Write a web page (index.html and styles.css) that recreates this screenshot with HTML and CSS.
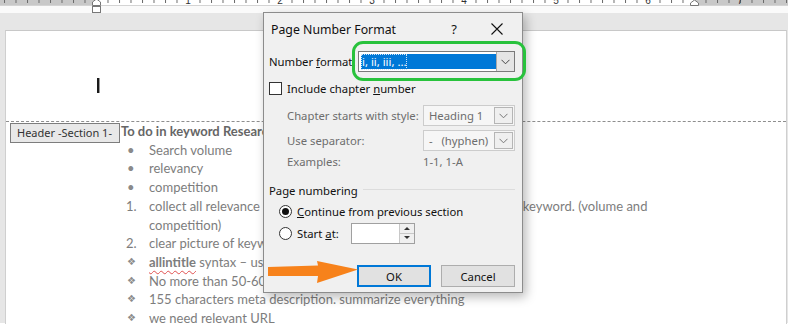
FILE: index.html
```html
<!DOCTYPE html>
<html>
<head>
	<meta charset="utf-8">
	<title>Page Number Format</title>
	<link rel="stylesheet" href="styles.css">
</head>
<body>

	<div class="top">
		<svg class="ruler" width="788" height="13" viewBox="0 0 788 13">
			<defs>
				<pattern id="ticks" x="96" y="0" width="11.5" height="5" patternUnits="userSpaceOnUse">
					<line x1="0.5" y1="0" x2="0.5" y2="3" stroke="#6a6a6a" stroke-width="1"/>
				</pattern>
			</defs>
			<rect x="0" y="0" width="96" height="5" fill="#c8c8c8"/>
			<rect x="96" y="0" width="598" height="5" fill="#ffffff"/>
			<rect x="694" y="0" width="94" height="5" fill="#c8c8c8"/>
			<rect x="0" y="0" width="788" height="4" fill="url(#ticks)"/>
			<line x1="0" y1="5.5" x2="788" y2="5.5" stroke="#d4d4d4"/>
			<g fill="#333" font-family="Liberation Sans, sans-serif" font-size="10" text-anchor="middle">
				<rect x="184" y="0" width="8" height="5" fill="#fff"/>
				<rect x="276" y="0" width="8" height="5" fill="#fff"/>
				<rect x="368" y="0" width="8" height="5" fill="#fff"/>
				<rect x="460" y="0" width="8" height="5" fill="#fff"/>
				<rect x="552" y="0" width="8" height="5" fill="#fff"/>
				<rect x="644" y="0" width="8" height="5" fill="#fff"/>
				<text x="188" y="4">1</text>
				<text x="280" y="4">2</text>
				<text x="372" y="4">3</text>
				<text x="464" y="4">4</text>
				<text x="556" y="4">5</text>
				<text x="648" y="4">6</text>
				<text x="740" y="4">7</text>
			</g>
			<path d="M92.5 5.5 L92.5 2 L96.5 -1 L100.5 2 L100.5 5.5 Z" fill="#fff" stroke="#777"/>
			<rect x="92.5" y="6.5" width="8" height="6" fill="#fff" stroke="#777"/>
			<path d="M690.5 5.5 L690.5 3 L694.5 0 L698.5 3 L698.5 5.5 Z" fill="#fff" stroke="#777"/>
		</svg>
	</div>

	<div class="canvas">
		<div class="page">
			<div class="header-zone">
				<div class="caret"></div>
			</div>
			<div class="header-line"></div>
			<div class="header-tag">Header -Section 1-</div>

			<div class="doc">
				<p class="heading">To do in keyword Research</p>
				<ul class="dots">
					<li>Search volume</li>
					<li>relevancy</li>
					<li>competition</li>
				</ul>
				<ol class="nums">
					<li>collect all relevance keywords and make a comprehensive list of a keyword. (volume and<br>competition)</li>
					<li>clear picture of keyword difficulty</li>
				</ol>
				<ul class="diamonds">
					<li><b class="typo">allintitle</b> syntax – use it for checking competition</li>
					<li>No more than 50-60 characters in title</li>
					<li>155 characters meta description. summarize everything</li>
					<li>we need relevant URL</li>
				</ul>
			</div>
		</div>
	</div>

	<div class="dialog">
		<div class="dlg-title">
			<span class="dlg-name">Page Number Format</span>
			<span class="dlg-help">?</span>
			<svg class="dlg-close" width="12" height="12" viewBox="0 0 12 12">
				<path d="M0.5 0.5 L11.5 11.5 M11.5 0.5 L0.5 11.5" stroke="#111" stroke-width="1.1"/>
			</svg>
		</div>

		<div class="row row-format">
			<span class="lbl">Number <u>f</u>ormat:</span>
			<div class="select select-main">
				<span class="sel-val"><span class="focus">i, ii, iii, ...</span></span>
				<span class="sel-btn">
					<svg width="9" height="6" viewBox="0 0 9 6"><path d="M0.5 0.8 L4.5 4.8 L8.5 0.8" fill="none" stroke="#444"/></svg>
				</span>
			</div>
		</div>

		<div class="row row-check">
			<span class="box"></span>
			<span>Include chapter <u>n</u>umber</span>
		</div>

		<div class="row row-sub row-chapter">
			<span class="lbl dim">Chapter starts with style:</span>
			<div class="select select-off">
				<span class="sel-val">Heading 1</span>
				<span class="sel-btn">
					<svg width="9" height="6" viewBox="0 0 9 6"><path d="M0.5 0.8 L4.5 4.8 L8.5 0.8" fill="none" stroke="#777"/></svg>
				</span>
			</div>
		</div>

		<div class="row row-sub row-sep">
			<span class="lbl dim">Use separator:</span>
			<div class="select select-off">
				<span class="sel-val">-&nbsp;&nbsp;&nbsp;(hyphen)</span>
				<span class="sel-btn">
					<svg width="9" height="6" viewBox="0 0 9 6"><path d="M0.5 0.8 L4.5 4.8 L8.5 0.8" fill="none" stroke="#777"/></svg>
				</span>
			</div>
		</div>

		<div class="row row-sub row-examples">
			<span class="lbl dim">Examples:</span>
			<span class="dim ex-val">1-1, 1-A</span>
		</div>

		<div class="row group-title">
			<span>Page numbering</span>
			<span class="group-rule"></span>
		</div>

		<div class="row row-radio row-continue">
			<span class="radio on"></span>
			<span><u>C</u>ontinue from previous section</span>
		</div>

		<div class="row row-radio row-start">
			<span class="radio"></span>
			<span class="start-lbl">Start <u>a</u>t:</span>
			<div class="spin">
				<span class="spin-field"></span>
				<span class="spin-btns">
					<span class="spin-up"></span>
					<span class="spin-down"></span>
				</span>
			</div>
		</div>

		<div class="row row-buttons">
			<span class="btn btn-ok">OK</span>
			<span class="btn">Cancel</span>
		</div>
	</div>

	<div class="highlight"></div>

	<svg class="arrow" width="92" height="24" viewBox="0 0 92 24">
		<path d="M0 6 L50 4.5 L49 0 L90 8.5 L49 22 L50 15 L0 15 Z" fill="#f7821b"/>
	</svg>

</body>
</html>
```

FILE: styles.css
```css
html, body {
	margin: 0;
	padding: 0;
}
body {
	width: 788px;
	height: 331px;
	overflow: hidden;
	position: relative;
	background: #ffffff;
	font-family: "Noto Sans", sans-serif;
}
.top {
	height: 13px;
	background: #fafafa;
}
.ruler {
	display: block;
}
.canvas {
	height: 310px;
	background: #e6e6e6;
	padding: 17px 1px 0 5px;
	box-sizing: border-box;
}
.page {
	position: relative;
	height: 293px;
	background: #ffffff;
	border-top: 1px solid #c8c8c8;
	border-left: 1px solid #cfcfcf;
	border-right: 1px solid #cfcfcf;
	overflow: hidden;
}
.header-zone {
	height: 90px;
	position: relative;
}
.caret {
	position: absolute;
	left: 91px;
	top: 47px;
	width: 2px;
	height: 15px;
	background: #1a1a1a;
	box-shadow: 1px 0 0 #9a9a9a;
}
.header-line {
	border-top: 1px dashed #8e8e8e;
}
.header-tag {
	position: absolute;
	left: 4px;
	top: 92px;
	width: 102px;
	height: 18px;
	background: #e8e8e8;
	border: 1px solid #7d7d7d;
	font-size: 11px;
	line-height: 18px;
	color: #333;
	padding-left: 6px;
	white-space: nowrap;
}
.doc {
	padding-left: 115px;
	font-family: Lato, "Liberation Sans", sans-serif;
	font-size: 13px;
	line-height: 18.7px;
	color: #7d7d7d;
}
.doc p, .doc ul, .doc ol {
	margin: 0;
	padding: 0;
	list-style: none;
}
.heading {
	font-weight: bold;
	color: #666;
}
.doc li {
	position: relative;
	padding-left: 28px;
}
.dots li:before {
	content: "•";
	position: absolute;
	left: 6px;
	color: #8a8a8a;
}
.nums {
	counter-reset: num;
}
.nums li {
	counter-increment: num;
}
.nums li:before {
	content: counter(num) ".";
	position: absolute;
	left: 5px;
}
.diamonds li:before {
	content: "❖";
	position: absolute;
	left: 6px;
	font-family: "DejaVu Sans", sans-serif;
	font-size: 10px;
	color: #8a8a8a;
}
.typo {
	text-decoration: underline wavy #e05050;
	text-decoration-thickness: 1px;
	text-underline-offset: 3px;
}

/* dialog */
.dialog {
	position: absolute;
	left: 263px;
	top: 12px;
	width: 260px;
	height: 281px;
	box-sizing: border-box;
	background: #f0f0f0;
	border: 1px solid #8c8c8c;
	box-shadow: 3px 4px 10px rgba(0, 0, 0, 0.28);
	padding: 0 7px 0 5px;
	font-size: 11.3px;
	color: #111;
}
.dlg-title {
	height: 32px;
	display: flex;
	align-items: center;
	padding-left: 2px;
}
.dlg-name {
	flex: 1;
	font-size: 12.3px;
}
.dlg-help {
	font-size: 13px;
	margin-right: 34px;
}
.dlg-close {
	margin-right: 12px;
}
.row {
	display: flex;
	align-items: center;
	white-space: nowrap;
}
.row-format {
	margin-top: 6px;
	height: 21px;
}
.row-format .lbl {
	width: 89px;
}
.select {
	display: flex;
	height: 100%;
	box-sizing: border-box;
	border: 1px solid #7a7a7a;
	background: #fff;
}
.select-main {
	width: 157px;
	padding: 2px 0 2px 2px;
}
.select-main .sel-val {
	flex: 1;
	background: #0078d7;
	color: #fff;
	display: flex;
	align-items: center;
	padding-left: 1px;
}
.focus {
	outline: 1px dotted #cfe4f7;
	outline-offset: 0;
	line-height: 14px;
}
.sel-btn {
	width: 17px;
	display: flex;
	align-items: center;
	justify-content: center;
	background: #e5e5e5;
	border-left: 1px solid #a9a9a9;
}
.select-main .sel-btn {
	margin: -2px 0;
}
.row-check {
	margin-top: 9px;
	height: 14px;
}
.box {
	width: 11px;
	height: 11px;
	border: 1px solid #333;
	background: #fff;
	margin-right: 5px;
}
.dim {
	color: #6d6d6d;
}
.row-sub {
	padding-left: 18px;
}
.row-sub .lbl {
	width: 136px;
}
.row-chapter {
	margin-top: 10px;
	height: 21px;
}
.row-sep {
	margin-top: 4px;
	height: 21px;
}
.select-off {
	width: 92px;
	border-color: #cccccc;
	background: #f6f6f6;
	color: #6d6d6d;
}
.select-off .sel-val {
	flex: 1;
	display: flex;
	align-items: center;
	padding-left: 5px;
}
.select-off .sel-btn {
	background: #efefef;
	border: 1px solid #b5b5b5;
	margin: 1px;
}
.row-examples {
	margin-top: 2px;
	height: 17px;
}
.group-title {
	margin-top: 12px;
	height: 17px;
}
.group-rule {
	flex: 1;
	border-top: 1px solid #dcdcdc;
	margin-left: 5px;
	margin-top: -2px;
}
.row-radio {
	padding-left: 10px;
}
.row-continue {
	margin-top: 4px;
	height: 17px;
}
.radio {
	width: 11px;
	height: 11px;
	border: 1px solid #333;
	border-radius: 50%;
	background: #fff;
	margin-right: 5px;
	position: relative;
}
.radio.on:after {
	content: "";
	position: absolute;
	left: 2px;
	top: 2px;
	width: 7px;
	height: 7px;
	border-radius: 50%;
	background: #111;
}
.row-start {
	margin-top: 3px;
	height: 21px;
}
.start-lbl {
	width: 54px;
}
.spin {
	display: flex;
	width: 64px;
	height: 21px;
	box-sizing: border-box;
	border: 1px solid #a0a0a0;
	background: #fff;
}
.spin-field {
	flex: 1;
}
.spin-btns {
	width: 14px;
	display: flex;
	flex-direction: column;
	border-left: 1px solid #c8c8c8;
}
.spin-up, .spin-down {
	flex: 1;
	position: relative;
	background: #f0f0f0;
}
.spin-up {
	border-bottom: 1px solid #c8c8c8;
}
.spin-up:after, .spin-down:after {
	content: "";
	position: absolute;
	left: 4px;
	top: 3px;
	border-left: 3px solid transparent;
	border-right: 3px solid transparent;
}
.spin-up:after {
	border-bottom: 3px solid #333;
}
.spin-down:after {
	top: 2px;
	border-top: 3px solid #333;
}
.row-buttons {
	margin-top: 21px;
	height: 22px;
	padding-left: 88px;
	gap: 10px;
}
.btn {
	width: 74px;
	height: 22px;
	box-sizing: border-box;
	display: flex;
	align-items: center;
	justify-content: center;
	background: #e1e1e1;
	border: 1px solid #adadad;
}
.btn-ok {
	width: 74px;
	border: 2px solid #0078d7;
}

.highlight {
	position: absolute;
	left: 352px;
	top: 41px;
	width: 174px;
	height: 40px;
	box-sizing: border-box;
	border: 3px solid #28c23c;
	border-radius: 11px;
}
.arrow {
	position: absolute;
	left: 268px;
	top: 261px;
}
```
